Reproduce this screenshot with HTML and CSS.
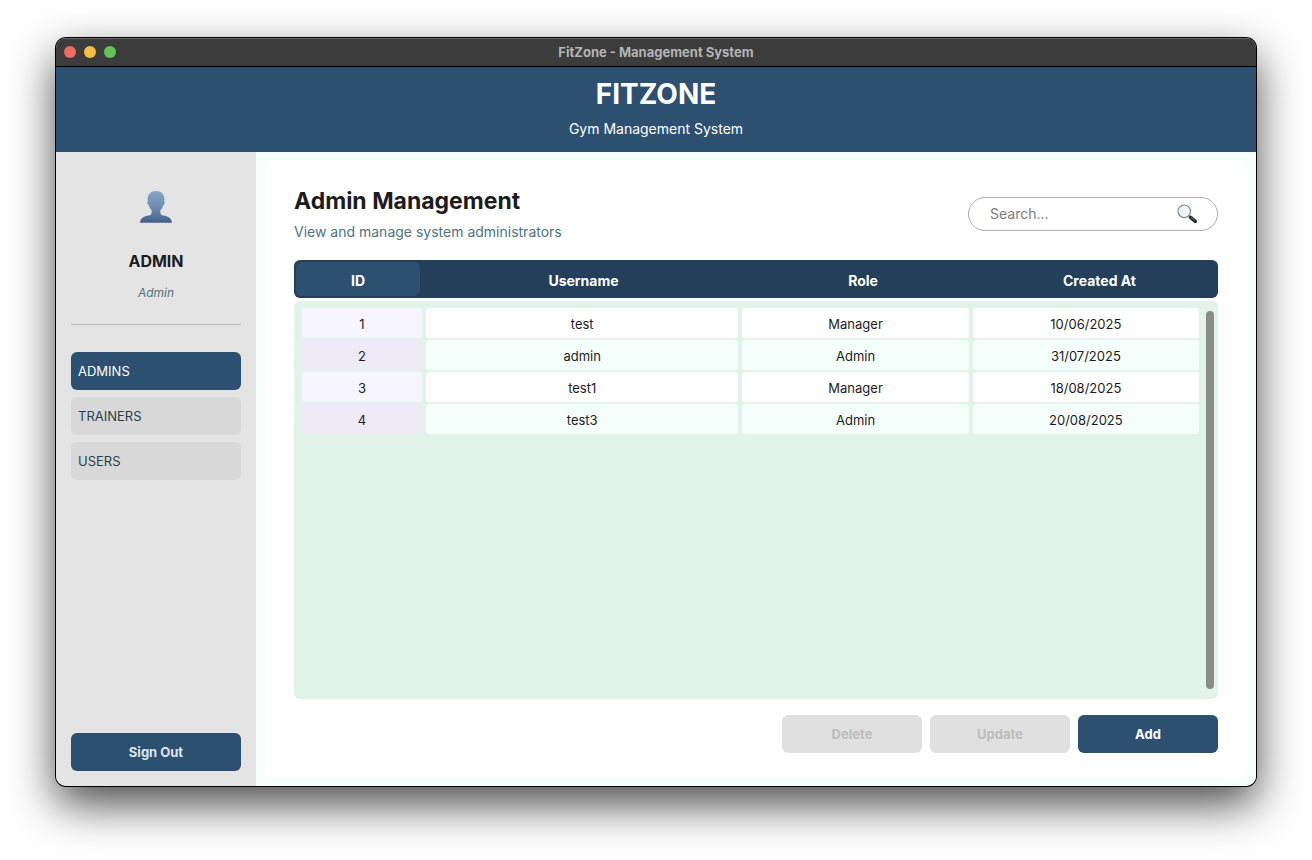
FILE: index.html
```html
<!DOCTYPE html>
<html lang="en">
<head>
<meta charset="utf-8">
<title>FitZone - Management System</title>
<link rel="stylesheet" href="styles.css">
</head>
<body>
<div class="window">
  <div class="titlebar">
    <div class="lights"><span class="light light-close"></span><span class="light light-min"></span><span class="light light-max"></span></div>
    <span class="window-title">FitZone - Management System</span>
  </div>
  <header class="banner">
    <h1 class="brand">FITZONE</h1>
    <p class="tagline">Gym Management System</p>
  </header>
  <div class="content">
    <aside class="sidebar">
      <div class="profile">
        <svg class="avatar" viewBox="0 0 32 32" aria-hidden="true">
          <defs><linearGradient id="bust" x1="0" y1="0" x2="0" y2="1"><stop offset="0" stop-color="#86a6c8"/><stop offset="0.5" stop-color="#6f8db0"/><stop offset="1" stop-color="#425f88"/></linearGradient></defs>
          <path fill="url(#bust)" d="M16 0c5.200 0 8.400 3.400 8.400 8.400 0 .8-.1 1.400-.2 2 .6.300.7 1.300.3 2.300-.2.700-.6 1.100-1 1.200-.7 2.300-1.700 4-3.100 5.200v2.300c0 1.600.9 2.600 3 3.100 4.600.9 7.900 2.100 8.600 7.300H0c.7-5.200 4-6.400 8.600-7.300 2.100-.5 3-1.500 3-3.100v-2.300c-1.400-1.200-2.400-2.900-3.100-5.200-.4-.1-.8-.5-1-1.200-.4-1-.3-2 .3-2.300-.1-.6-.2-1.200-.2-2C7.600 3.400 10.800 0 16 0z"/>
        </svg>
        <strong class="user-name">ADMIN</strong>
        <em class="user-role">Admin</em>
      </div>
      <nav class="menu">
        <button class="menu-item menu-item-active" type="button">ADMINS</button>
        <button class="menu-item" type="button">TRAINERS</button>
        <button class="menu-item" type="button">USERS</button>
      </nav>
      <button class="btn btn-signout" type="button">Sign Out</button>
    </aside>
    <main class="main">
      <section class="panel">
        <div class="panel-head">
          <div>
            <h2 class="title">Admin Management</h2>
            <p class="subtitle">View and manage system administrators</p>
          </div>
          <div class="search">
            <input class="search-input" type="text" placeholder="Search..." aria-label="Search">
            <button class="search-btn" type="button" aria-label="Run search">
              <svg class="search-icon" viewBox="0 0 20 20" aria-hidden="true">
                <path d="M11.800 11.800l2.500 2.500" stroke="#8d949b" stroke-width="2"/>
                <path d="M13.600 13.400l4.700 4" stroke="#25292e" stroke-width="3.400" stroke-linecap="round"/>
                <path d="M13.900 13l3.800 3.200" stroke="#68717a" stroke-width="1"/>
                <circle cx="7.300" cy="7.300" r="6.300" fill="#f1f3f5" stroke="#7f8a96" stroke-width="1.200"/>
                <path d="M3.300 6.500c.4-1.900 1.800-3 3.600-3.200" fill="none" stroke="#fff" stroke-width="1.200"/>
              </svg>
            </button>
          </div>
        </div>
        <table class="grid">
          <thead class="grid-head">
            <tr class="head-row"><th class="head-cell head-cell-sorted">ID</th><th class="head-cell">Username</th><th class="head-cell">Role</th><th class="head-cell">Created At</th></tr>
          </thead>
          <tbody class="grid-body">
            <tr class="row"><td class="cell cell-id">1</td><td class="cell">test</td><td class="cell">Manager</td><td class="cell">10/06/2025</td></tr>
            <tr class="row"><td class="cell cell-id">2</td><td class="cell">admin</td><td class="cell">Admin</td><td class="cell">31/07/2025</td></tr>
            <tr class="row"><td class="cell cell-id">3</td><td class="cell">test1</td><td class="cell">Manager</td><td class="cell">18/08/2025</td></tr>
            <tr class="row"><td class="cell cell-id">4</td><td class="cell">test3</td><td class="cell">Admin</td><td class="cell">20/08/2025</td></tr>
          </tbody>
        </table>
        <div class="actions">
          <button class="btn" type="button" disabled>Delete</button>
          <button class="btn" type="button" disabled>Update</button>
          <button class="btn" type="button">Add</button>
        </div>
      </section>
    </main>
  </div>
</div>
</body>
</html>
```
FILE: styles.css
```css
* { box-sizing: border-box; }

body {
  margin: 0;
  min-height: 100vh;
  padding: 38px 56px 74px;
  display: flex;
  background: #fff;
  color: #1c1c1e;
  font-family: Inter, "Liberation Sans", sans-serif;
  font-size: 13px;
  line-height: 16px;
}

h1, h2, p { margin: 0; }

button, input {
  margin: 0;
  border: 0;
  font: inherit;
  color: inherit;
}

.window {
  flex: 1;
  display: flex;
  flex-direction: column;
  border-radius: 10px;
  overflow: hidden;
  box-shadow: 0 0 0 1px #000, 0 18px 45px rgba(0, 0, 0, 0.72);
}

.titlebar {
  display: grid;
  grid-template-columns: 1fr auto 1fr;
  align-items: center;
  height: 29px;
  padding: 0 8px 2px;
  background: #3c3c3c;
  border-top: 1px solid #6b6b6b;
  border-bottom: 1px solid #000;
}

.lights { display: flex; gap: 8px; }
.light { width: 12px; height: 12px; border-radius: 50%; }
.light-close { background: #ed6b5f; }
.light-min { background: #f5be45; }
.light-max { background: #61c454; }
.window-title { font-weight: 700; color: #b4b4b4; }

.banner {
  display: flex;
  flex-direction: column;
  align-items: center;
  gap: 9px;
  padding: 10px 0 14px;
  background: #2d5070;
  color: #fff;
}

.brand { font-size: 28px; line-height: 34px; font-weight: 700; }
.tagline { font-size: 14px; line-height: 18px; font-weight: 400; }

.content { flex: 1; display: flex; }

.sidebar {
  width: 200px;
  display: flex;
  flex-direction: column;
  padding: 39px 15px 15px;
  background: #e4e4e4;
}

.profile {
  display: flex;
  flex-direction: column;
  align-items: center;
  padding-bottom: 23px;
  border-bottom: 1px solid #b9b9b9;
}

.avatar { width: 32px; height: 32px; margin-bottom: 28px; }
.user-name { font-size: 16px; line-height: 20px; margin-bottom: 14px; }
.user-role { font-size: 12px; color: #4f7482; }

.menu {
  flex: 1;
  display: flex;
  flex-direction: column;
  gap: 7px;
  padding-top: 27px;
}

.menu-item {
  height: 38px;
  padding: 0 7px;
  border-radius: 6px;
  background: #d8d8d8;
  color: #2b3f4a;
  text-align: left;
}

.menu-item-active { background: #2d5070; color: #fff; }

.btn {
  width: 140px;
  height: 38px;
  border-radius: 6px;
  background: #2d5070;
  color: #fff;
  font-weight: 700;
}

.btn:disabled { background: #e0e0e0; color: #bdbdbd; }
.btn-signout { width: 100%; color: #dce6f2; }

.main {
  flex: 1;
  display: flex;
  padding: 8px;
  background: #f5fffb;
}

.panel {
  flex: 1;
  display: flex;
  flex-direction: column;
  padding: 26px 30px 25px;
  border-radius: 8px;
  background: #fff;
}

.panel-head {
  display: flex;
  justify-content: space-between;
  align-items: center;
  padding: 0 0 19px;
}

.title { font-size: 23px; line-height: 30px; font-weight: 700; }
.subtitle { padding-top: 7px; font-size: 14px; line-height: 18px; color: #4f7482; }

.search {
  width: 250px;
  height: 34px;
  display: flex;
  align-items: center;
  padding: 0 20px 0 21px;
  border: 1px solid #adadad;
  border-radius: 17px;
}

.search-input {
  flex: 1;
  min-width: 0;
  padding: 0;
  background: transparent;
  font-size: 14px;
  outline: 0;
}

.search-input::placeholder { color: #7d7d7d; }
.search-btn { display: flex; padding: 0; background: transparent; }
.search-icon { width: 20px; height: 20px; }

.grid { flex: 1; display: flex; flex-direction: column; gap: 3px; }

.grid-head {
  display: block;
  padding: 2px;
  border-radius: 6px;
  background: #233f59;
  color: #fff;
}

.head-row {
  display: grid;
  grid-template-columns: 124px 319fr 232fr 233fr;
  gap: 4px;
}

.head-cell {
  padding: 10px 0 6px;
  border-radius: 6px;
  font-size: 14px;
  line-height: 18px;
  font-weight: 700;
}

.head-cell-sorted { background: #2d5070; }

.grid-body {
  position: relative;
  flex: 1;
  display: flex;
  flex-direction: column;
  gap: 2px;
  padding: 7px 19px 7px 8px;
  border-radius: 6px;
  background: #e2f3eb;
}

/* scrollbar thumb laid over the list's right edge */
.grid-body::after {
  content: "";
  position: absolute;
  top: 10px;
  right: 4px;
  bottom: 10px;
  width: 8px;
  border-radius: 4px;
  background: #8b8b8b;
}

.row {
  display: grid;
  grid-template-columns: 120px 312fr 226fr 226fr;
  gap: 4px;
}

.cell {
  padding: 8px 0 6px;
  border-radius: 3px;
  background: #fff;
  text-align: center;
}

.cell-id { background: #f7f5ff; }
.row:nth-child(even) .cell { background: #f5fffb; }
.row:nth-child(even) .cell-id { background: #eeeaf6; }

.actions {
  display: flex;
  justify-content: flex-end;
  gap: 8px;
  padding-top: 16px;
}
```
